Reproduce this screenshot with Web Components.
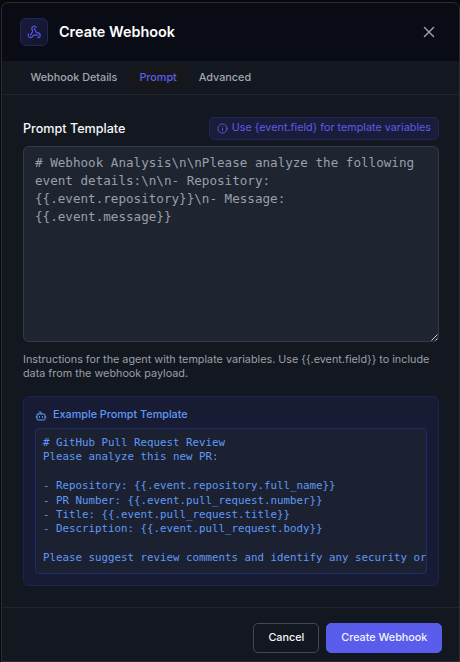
<!DOCTYPE html>
<html lang="en">
<head>
<meta charset="utf-8">
<title>Create Webhook</title>
<style>
html, body { margin: 0; height: 100%; background: #08090b; overflow: hidden; }
body { font-family: Inter, "Liberation Sans", sans-serif; color: #f9fafb; }
</style>
</head>
<body>
<webhook-dialog></webhook-dialog>
<script>
const define = (name, html, setup) => customElements.define(name, class extends HTMLElement {
  connectedCallback() {
    if (this.shadowRoot) return;
    const t = document.createElement('template');
    t.innerHTML = '<style>*{box-sizing:border-box}:host{box-sizing:border-box}</style>' + html;
    this.attachShadow({ mode: 'open' }).append(t.content.cloneNode(true));
    if (setup) setup(this);
  }
});

define('ui-icon', `<style>
:host{display:block;flex:none;width:14px;height:14px}
svg{display:block;width:100%;height:100%;fill:none;stroke:currentColor;stroke-width:2;stroke-linecap:round;stroke-linejoin:round}
</style><svg viewBox="0 0 24 24"></svg>`, el => {
  const shapes = {
    webhook: '<path d="M18 16.98h-5.99c-1.1 0-1.95.94-2.48 1.9A4 4 0 0 1 2 17c.01-.7.2-1.4.57-2"/><path d="m6 17 3.13-5.78c.53-.97.1-2.18-.5-3.1a4 4 0 1 1 6.89-4.06"/><path d="m12 6 3.13 5.73C15.66 12.7 16.9 13 18 13a4 4 0 0 1 0 8"/>',
    close: '<path d="M18 6 6 18M6 6l12 12"/>',
    info: '<circle cx="12" cy="12" r="10"/><path d="M12 16v-4M12 8h.01"/>',
    bot: '<path d="M12 8V4H8"/><rect width="16" height="12" x="4" y="8" rx="2"/><path d="M2 14h2M20 14h2M15 13v2M9 13v2"/>'
  };
  el.shadowRoot.querySelector('svg').innerHTML = shapes[el.getAttribute('name')];
});

define('dialog-header', `<style>
:host{display:flex;align-items:center;height:58px;padding:0 21px 0 18px;background:#090c14}
.logo{display:grid;place-items:center;width:28px;height:28px;border:1px solid #22255a;border-radius:6px;background:linear-gradient(135deg,#191b3c,#13152d);color:#5558e4}
.logo ui-icon{width:14.4px;height:14.4px}
h2{margin:0 auto 0 11px;font-size:14.4px;font-weight:600;line-height:20px;color:#fff}
.close{width:18px;height:18px;color:#989ca7}
</style><div class="logo"><ui-icon name="webhook"></ui-icon></div><h2><slot></slot></h2><ui-icon class="close" name="close"></ui-icon>`);

define('tab-item', `<style>
:host{display:flex;align-items:center;height:24px;padding:0 11px;border-radius:5px;font-size:10.8px;font-weight:500;line-height:16px;color:#a1a6b0}
:host([active]){background:#15171b;color:#5d5feb}
</style><slot></slot>`);

define('tab-bar', `<style>
:host{display:flex;align-items:center;height:34px;padding:0 17.4px;background:#13171f;border-bottom:1px solid #20242d}
</style><slot></slot>`);

define('hint-badge', `<style>
:host{display:flex;align-items:center;gap:4px;height:23px;padding:0 7px 2px 7px;border:1px solid #22255c;border-radius:5px;background:#1a1c3a;color:#5b5de8;font-size:10.8px;line-height:16px;white-space:nowrap}
ui-icon{width:11px;height:11px;position:relative;top:1px}
</style><ui-icon name="info"></ui-icon><span><slot></slot></span>`);

define('prompt-field', `<style>
:host{display:block}
.top{display:flex;justify-content:space-between;align-items:center;height:23px;margin-bottom:6px}
label{font-size:12.6px;font-weight:500;line-height:18px;color:#f5f6f8}
textarea{display:block;width:100%;height:196px;margin:0;padding:7px 11px;border:1px solid #333a46;border-radius:6px;background:#1f2530;outline:0;resize:none;overflow:hidden;color:#9ca3af;font:12.6px/18px "DejaVu Sans Mono","Liberation Mono",monospace}
textarea::placeholder{color:#9a9fa9;opacity:1}
.box{position:relative}
svg{position:absolute;right:1px;bottom:1px;width:7px;height:7px;stroke:#c8c9cb;stroke-width:1;fill:none}
p{margin:11px 0 0;font-size:10.8px;line-height:14.4px;color:#9a9faa}
</style><div class="top"><label for="p">Prompt Template</label><hint-badge>Use {event.field} for template variables</hint-badge></div>
<div class="box"><textarea id="p" placeholder="# Webhook Analysis\\n\\nPlease analyze the following event details:\\n\\n- Repository: {{.event.repository}}\\n- Message: {{.event.message}}"></textarea><svg viewBox="0 0 7 7"><path d="M.5 6.5l6-6M4.5 6.5l2-2"/></svg></div>
<p><slot></slot></p>`);

define('example-card', `<style>
:host{display:block;height:190px;padding:11px 11px 11px;border:1px solid #1b2455;border-radius:6px;background:#171b34;color:#6098f5}
.head{display:flex;align-items:center;gap:6px;height:14px;margin-bottom:6px;font-size:10.8px;font-weight:500;line-height:14px}
.head ui-icon{width:12px;height:12px;position:relative;top:1px}
pre{margin:0;height:146px;padding:7px 7px;border:1px solid #1d2d6c;border-radius:4px;background:#1b2131;overflow:hidden;font:10.8px/14.4px "DejaVu Sans Mono","Liberation Mono",monospace}
</style><div class="head"><ui-icon name="bot"></ui-icon><span>Example Prompt Template</span></div><pre># GitHub Pull Request Review
Please analyze this new PR:

- Repository: {{.event.repository.full_name}}
- PR Number: {{.event.pull_request.number}}
- Title: {{.event.pull_request.title}}
- Description: {{.event.pull_request.body}}

Please suggest review comments and identify any security or</pre>`);

define('action-button', `<style>
:host{display:block}
button{display:block;height:30px;padding:0 13.6px 0 14.4px;border:1px solid #424853;border-radius:5px;background:#13171f;color:#f7f8fa;font:500 10.8px/16px Inter,"Liberation Sans",sans-serif}
:host([primary]) button{border-color:#5a5ceb;background:#5a5ceb;color:#f4f4ff}
</style><button><slot></slot></button>`);

define('webhook-dialog', `<style>
:host{display:flex;flex-direction:column;margin:2px 0 0 1px;width:459px;height:660px;border:1px solid #2b2c36;border-radius:7px 7px 0 0;background:#13171f;overflow:hidden}
main{flex:1;padding:22px 20px 0 21px}
example-card{margin-top:14.2px}
footer{display:flex;justify-content:flex-end;gap:7px;height:54px;padding:15px 17px 0;border-top:1px solid #20242d}
</style>
<dialog-header>Create Webhook</dialog-header>
<tab-bar><tab-item>Webhook Details</tab-item><tab-item active>Prompt</tab-item><tab-item>Advanced</tab-item></tab-bar>
<main><prompt-field>Instructions for the agent with template variables. Use {{.event.field}} to include data from the webhook payload.</prompt-field><example-card></example-card></main>
<footer><action-button>Cancel</action-button><action-button primary>Create Webhook</action-button></footer>`);
</script>
</body>
</html>
